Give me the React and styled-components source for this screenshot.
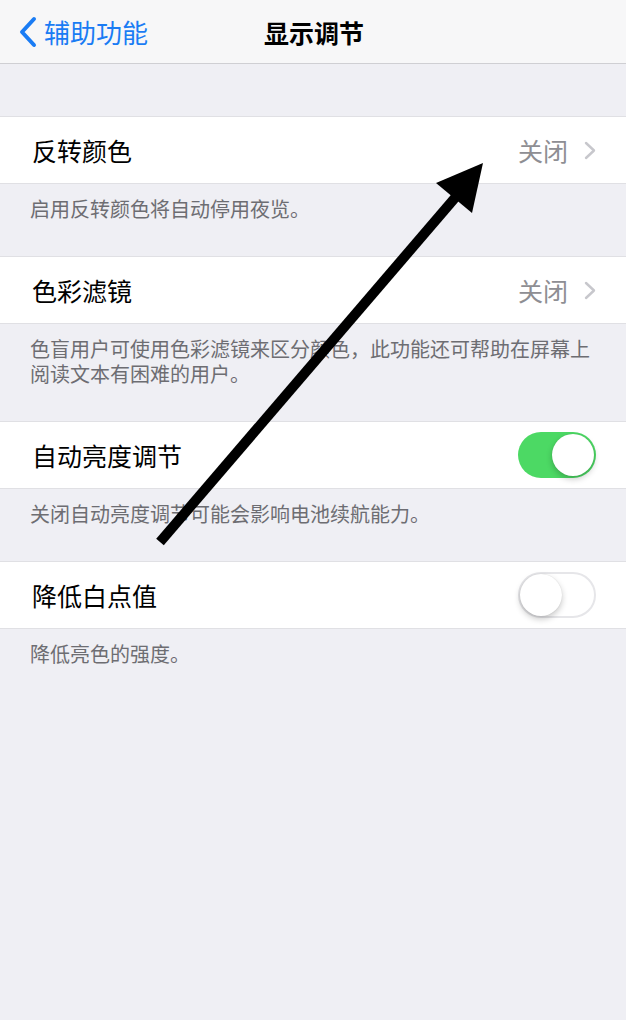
import React from 'react';
import styled, { createGlobalStyle } from 'styled-components';

const GlobalStyle = createGlobalStyle`
  html, body {
    margin: 0;
    padding: 0;
    background: #efeff4;
  }
  body {
    font-family: "Noto Sans CJK SC", "Noto Sans", sans-serif;
    -webkit-font-smoothing: antialiased;
  }
`;

const sections = [
  { title: '反转颜色', value: '关闭', note: '启用反转颜色将自动停用夜览。' },
  {
    title: '色彩滤镜',
    value: '关闭',
    note: '色盲用户可使用色彩滤镜来区分颜色，此功能还可帮助在屏幕上阅读文本有困难的用户。',
  },
  { title: '自动亮度调节', toggle: true, on: true, note: '关闭自动亮度调节可能会影响电池续航能力。' },
  { title: '降低白点值', toggle: true, on: false, note: '降低亮色的强度。' },
];

const Page = styled.div`
  position: relative;
  width: 626px;
  min-height: 1020px;
  background: #efeff4;
  overflow: hidden;
`;

const NavBar = styled.div`
  position: relative;
  height: 63px;
  background: #f7f7f8;
  border-bottom: 1px solid #cfcfd3;
  display: flex;
  align-items: center;
  justify-content: center;
`;

const BackButton = styled.div`
  position: absolute;
  left: 18px;
  top: 0;
  height: 63px;
  display: flex;
  align-items: center;
  gap: 6px;
  color: #1a7cf4;
  font-size: 26px;
`;

const NavTitle = styled.div`
  font-size: 25px;
  font-weight: 700;
  color: #000;
  margin-left: 2px;
`;

const Spacer = styled.div`
  height: 52px;
`;

const Row = styled.div`
  height: 66px;
  background: #fff;
  border-top: 1px solid #e0e0e4;
  border-bottom: 1px solid #e0e0e4;
  display: flex;
  align-items: center;
  padding: 0 30px 0 32px;
`;

const Label = styled.div`
  flex: 1;
  font-size: 25px;
  color: #000;
`;

const Value = styled.div`
  display: flex;
  align-items: center;
  gap: 16px;
  font-size: 25px;
  color: #8e8e93;
`;

const Toggle = styled.div`
  position: relative;
  width: 78px;
  height: 46px;
  border-radius: 23px;
  box-sizing: border-box;
  background: ${p => (p.on ? '#4cd964' : '#fff')};
  border: ${p => (p.on ? 'none' : '2px solid #e6e6e9')};
`;

const Knob = styled.div`
  position: absolute;
  top: ${p => (p.on ? '2px' : '0')};
  ${p => (p.on ? 'right: 2px;' : 'left: 0;')}
  width: 42px;
  height: 42px;
  border-radius: 50%;
  background: #fff;
  box-shadow: 0 3px 6px rgba(0, 0, 0, 0.22), 0 0 1px rgba(0, 0, 0, 0.15);
`;

const Note = styled.div`
  padding: 12px 30px 35px 30px;
  font-size: 20px;
  line-height: 25px;
  color: #6d6d72;
`;

const Arrow = styled.svg`
  position: absolute;
  left: 0;
  top: 0;
  pointer-events: none;
`;

const ChevronLeft = () => (
  <svg width="20" height="32" viewBox="0 0 20 32">
    <path d="M16 3 L4 16 L16 29" fill="none" stroke="#1a7cf4" strokeWidth="4" strokeLinecap="round" strokeLinejoin="round" />
  </svg>
);

const ChevronRight = () => (
  <svg width="12" height="19" viewBox="0 0 12 19">
    <path d="M2 2 L10 9.5 L2 17" fill="none" stroke="#c7c7cc" strokeWidth="2.4" strokeLinecap="round" strokeLinejoin="round" />
  </svg>
);

const App = () => (
  <>
    <GlobalStyle />
    <Page>
      <NavBar>
        <BackButton>
          <ChevronLeft />
          <span>辅助功能</span>
        </BackButton>
        <NavTitle>显示调节</NavTitle>
      </NavBar>
      <Spacer />
      {sections.map(s => (
        <div key={s.title}>
          <Row>
            <Label>{s.title}</Label>
            {s.toggle ? (
              <Toggle on={s.on}>
                <Knob on={s.on} />
              </Toggle>
            ) : (
              <Value>
                <span>{s.value}</span>
                <ChevronRight />
              </Value>
            )}
          </Row>
          <Note>{s.note}</Note>
        </div>
      ))}
      <Arrow width="626" height="1020" viewBox="0 0 626 1020">
        <line x1="160" y1="542" x2="460" y2="192" stroke="#000" strokeWidth="10" />
        <polygon points="483,163 436,183 472,213" fill="#000" />
      </Arrow>
    </Page>
  </>
);

export default App;
